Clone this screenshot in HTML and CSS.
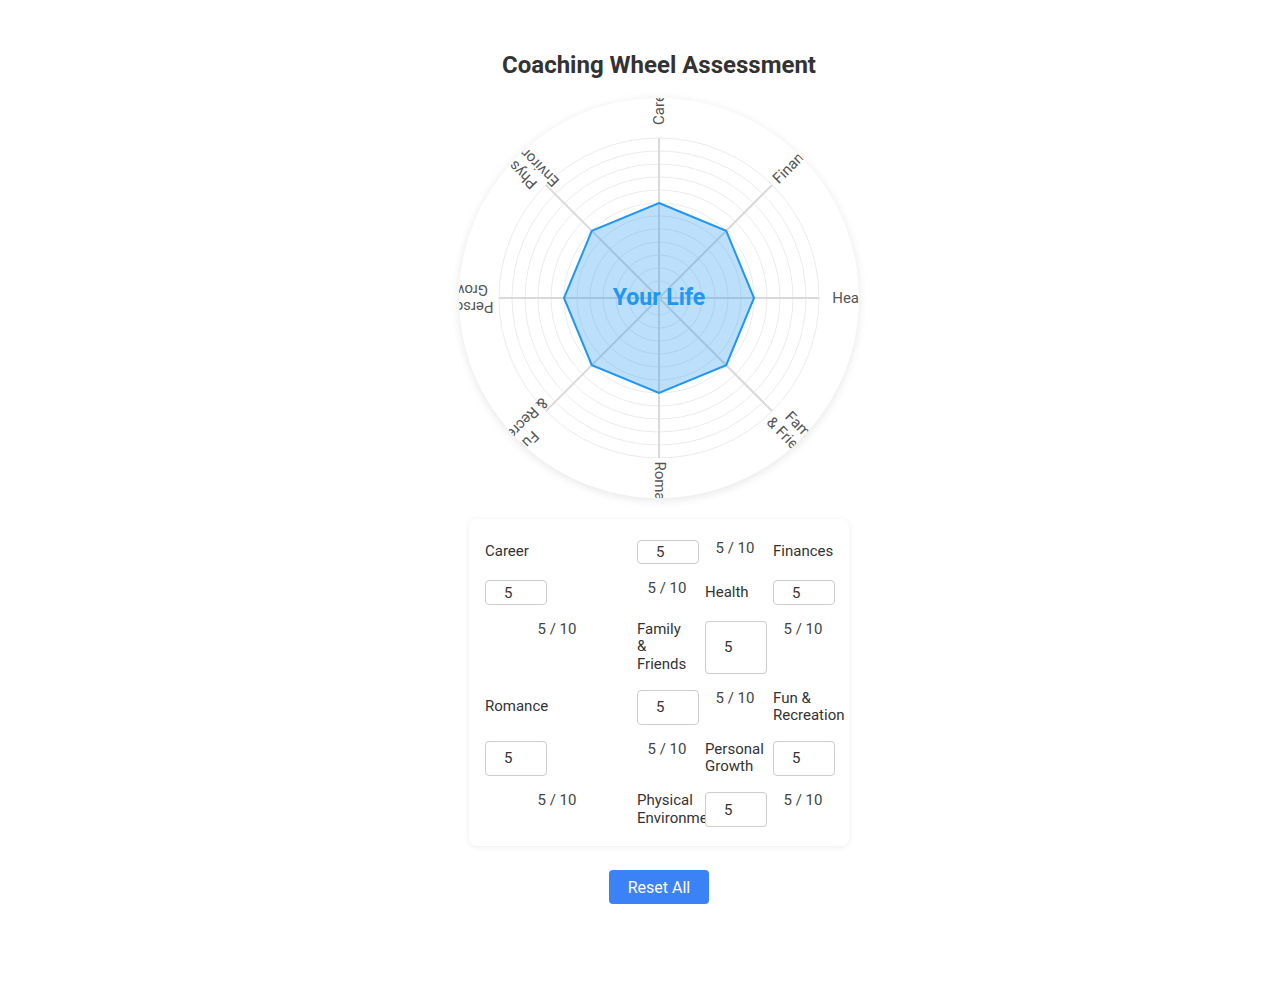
FILE: index.html
```html
<!DOCTYPE html>
<html lang="en">
<head>
<meta charset="utf-8">
<title>Coaching Wheel Assessment</title>
<link rel="stylesheet" href="styles.css">
</head>
<body>
<div class="app">
  <h1 class="title">Coaching Wheel Assessment</h1>

  <div class="wheel">
    <svg class="wheel-svg" width="400" height="400" viewBox="0 0 400 400">
      <g class="rings" fill="none" stroke="#ebebeb" stroke-width="1">
        <circle cx="200" cy="200" r="160"/>
        <circle cx="200" cy="200" r="147"/>
        <circle cx="200" cy="200" r="134"/>
        <circle cx="200" cy="200" r="121"/>
        <circle cx="200" cy="200" r="108"/>
        <circle cx="200" cy="200" r="95"/>
        <circle cx="200" cy="200" r="82"/>
        <circle cx="200" cy="200" r="69"/>
        <circle cx="200" cy="200" r="56"/>
        <circle cx="200" cy="200" r="43"/>
        <circle cx="200" cy="200" r="30"/>
        <circle cx="200" cy="200" r="17"/>
      </g>
      <g class="axes" stroke="#d9d9d9" stroke-width="2">
        <line x1="200" y1="200" x2="200" y2="40"/>
        <line x1="200" y1="200" x2="313.14" y2="86.86"/>
        <line x1="200" y1="200" x2="360" y2="200"/>
        <line x1="200" y1="200" x2="313.14" y2="313.14"/>
        <line x1="200" y1="200" x2="200" y2="360"/>
        <line x1="200" y1="200" x2="86.86" y2="313.14"/>
        <line x1="200" y1="200" x2="40" y2="200"/>
        <line x1="200" y1="200" x2="86.86" y2="86.86"/>
      </g>
      <polygon points="200,105 267.18,132.82 295,200 267.18,267.18 200,295 132.82,267.18 105,200 132.82,132.82"
               fill="rgba(33,150,243,0.3)" stroke="#2196F3" stroke-width="2" stroke-linejoin="miter"/>
    </svg>

    <div class="spoke" style="transform: rotate(-90deg)"><div class="wheel-label">Career</div></div>
    <div class="spoke" style="transform: rotate(-45deg)"><div class="wheel-label">Finances</div></div>
    <div class="spoke" style="transform: rotate(0deg)"><div class="wheel-label">Health</div></div>
    <div class="spoke" style="transform: rotate(45deg)"><div class="wheel-label">Family<br>&amp; Friends</div></div>
    <div class="spoke" style="transform: rotate(90deg)"><div class="wheel-label">Romance</div></div>
    <div class="spoke" style="transform: rotate(135deg)"><div class="wheel-label">Fun<br>&amp; Recreation</div></div>
    <div class="spoke" style="transform: rotate(180deg)"><div class="wheel-label">Personal<br>Growth</div></div>
    <div class="spoke" style="transform: rotate(225deg)"><div class="wheel-label">Physical<br>Environment</div></div>

    <div class="center-label">Your Life</div>
  </div>

  <div class="card">
    <div class="grid">
      <div class="cat-label">Career</div>
      <input class="score-input" type="text" value="5">
      <span class="score-value">5 / 10</span>

      <div class="cat-label">Finances</div>
      <input class="score-input" type="text" value="5">
      <span class="score-value">5 / 10</span>

      <div class="cat-label">Health</div>
      <input class="score-input" type="text" value="5">
      <span class="score-value">5 / 10</span>

      <div class="cat-label">Family &amp; Friends</div>
      <input class="score-input" type="text" value="5">
      <span class="score-value">5 / 10</span>

      <div class="cat-label">Romance</div>
      <input class="score-input" type="text" value="5">
      <span class="score-value">5 / 10</span>

      <div class="cat-label">Fun &amp; Recreation</div>
      <input class="score-input" type="text" value="5">
      <span class="score-value">5 / 10</span>

      <div class="cat-label">Personal Growth</div>
      <input class="score-input" type="text" value="5">
      <span class="score-value">5 / 10</span>

      <div class="cat-label">Physical Environment</div>
      <input class="score-input" type="text" value="5">
      <span class="score-value">5 / 10</span>
    </div>
  </div>

  <button class="reset-btn" type="button">Reset All</button>
</div>
</body>
</html>
```

FILE: styles.css
```css
html, body {
  margin: 0;
  padding: 0;
  background: #ffffff;
}

body {
  font-family: Roboto, "Liberation Sans", Arial, sans-serif;
  color: #333333;
}

.app {
  display: flex;
  flex-direction: column;
  align-items: center;
  padding: 51px 0 40px 40px;
}

.title {
  margin: 0 0 19px;
  font-size: 24px;
  font-weight: 700;
  line-height: normal;
  color: #333333;
}

/* ---------- wheel ---------- */
.wheel {
  position: relative;
  width: 400px;
  height: 400px;
  border-radius: 50%;
  overflow: hidden;
  background: #ffffff;
  box-shadow: 0 2px 10px rgba(0, 0, 0, 0.1);
  flex-shrink: 0;
}

.wheel-svg {
  display: block;
}

.spoke {
  position: absolute;
  left: 200px;
  top: 200px;
  width: 0;
  height: 0;
}

.wheel-label {
  position: absolute;
  left: 195px;
  top: 0;
  transform: translate(-50%, -50%);
  font-size: 15px;
  line-height: 17px;
  color: #555555;
  text-align: center;
  white-space: nowrap;
}

.center-label {
  position: absolute;
  inset: 0;
  display: flex;
  align-items: center;
  justify-content: center;
  padding-bottom: 2px;
  font-size: 23px;
  font-weight: 700;
  color: #2196F3;
}

/* ---------- score card ---------- */
.card {
  margin-top: 21px;
  width: 380px;
  box-sizing: border-box;
  padding: 21px 16px 19px;
  background: #ffffff;
  border-radius: 8px;
  box-shadow: 0 1px 6px rgba(0, 0, 0, 0.08);
}

.grid {
  display: grid;
  grid-template-columns: 1fr 60px 60px 60px;
  column-gap: 8px;
  row-gap: 16px;
  font-size: 15px;
  line-height: 17.6px;
}

.cat-label {
  display: flex;
  align-items: center;
  padding-right: 6px;
  color: #333333;
}

.score-input {
  width: 62px;
  min-height: 24.4px;
  box-sizing: border-box;
  margin: 0;
  padding: 0 0 0 18px;
  border: 1px solid #cccccc;
  border-radius: 4px;
  background: #ffffff;
  font-family: Roboto, "Liberation Sans", Arial, sans-serif;
  font-size: 15px;
  color: #333333;
  outline: none;
}

.score-value {
  display: block;
  text-align: center;
  color: #444444;
}

/* ---------- button ---------- */
.reset-btn {
  margin-top: 24px;
  width: 100px;
  height: 34px;
  padding: 0;
  border: none;
  border-radius: 4px;
  background: #3b82f6;
  color: #ffffff;
  font-family: Roboto, "Liberation Sans", Arial, sans-serif;
  font-size: 16px;
  cursor: pointer;
}
```
